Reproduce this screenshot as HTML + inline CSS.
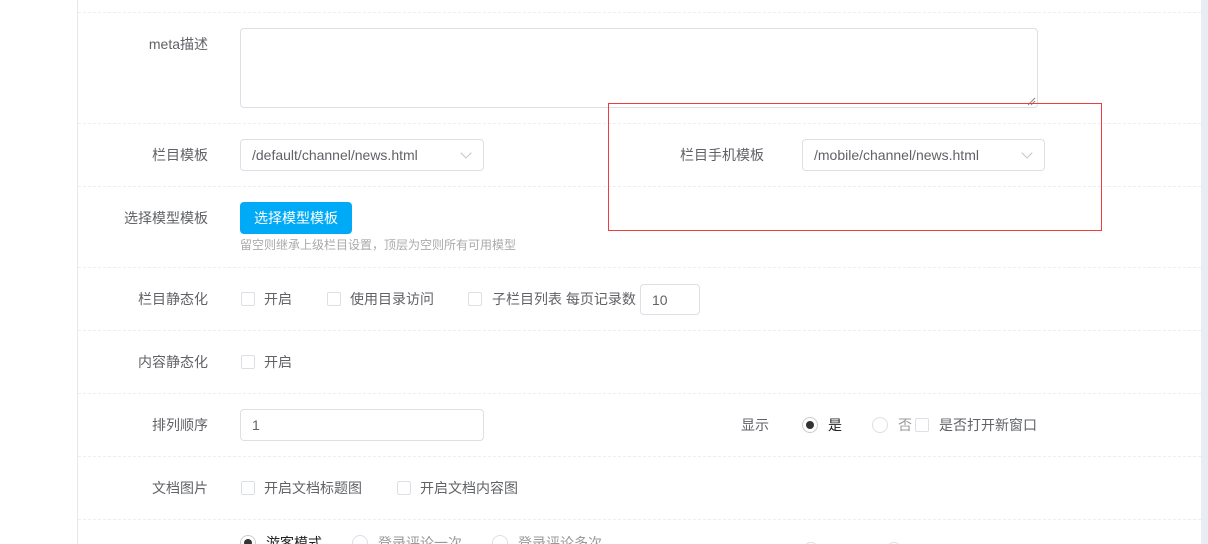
<!DOCTYPE html>
<html style="overflow:hidden;height:544px"><head><meta charset="utf-8"><style>
*{margin:0;padding:0;box-sizing:border-box}
html,body{overflow:hidden}
body{width:1208px;height:544px;overflow:hidden;background:#fff;position:relative;font-family:"Liberation Sans","Noto Sans CJK SC",sans-serif;font-size:14px;color:#606266}
.a{position:absolute}
.vl{left:77px;top:0;width:1px;height:544px;background:#e4e7ed}
.rs{left:1201px;top:0;width:7px;height:544px;background:#e9edf3}
.hr{left:78px;width:1123px;height:0;border-top:1px dashed #ebeef5}
.lb{width:130px;text-align:right;left:78px;line-height:20px}
.inp{border:1px solid #dcdfe6;border-radius:4px;background:#fff;color:#606266;line-height:30px;padding-left:11px}
.cb{width:14px;height:14px;border:1px solid #dcdfe6;border-radius:2px;background:#fff}
.rd{width:16px;height:16px;border:1px solid #dcdfe6;border-radius:50%;background:#fff}
.rd.on{border-color:#ccc}
.rd.on:after{content:"";position:absolute;left:3px;top:3px;width:8px;height:8px;border-radius:50%;background:#333}
.t{line-height:20px}
.chev{width:8px;height:8px;border-right:1px solid #c0c4cc;border-bottom:1px solid #c0c4cc;transform:rotate(45deg)}
</style></head><body>
<div class="a vl"></div><div class="a rs"></div>
<div class="a hr" style="top:12px"></div>
<div class="a hr" style="top:123px"></div>
<div class="a hr" style="top:186px"></div>
<div class="a hr" style="top:267px"></div>
<div class="a hr" style="top:330px"></div>
<div class="a hr" style="top:393px"></div>
<div class="a hr" style="top:456px"></div>
<div class="a hr" style="top:519px"></div>

<div class="a lb" style="top:34px">meta描述</div>
<div class="a inp" style="left:240px;top:28px;width:798px;height:80px"></div>
<svg class="a" style="left:1026px;top:96px" width="10" height="10"><path d="M2 9L9 2M5 9L9 5" stroke="#888" stroke-width="1"/></svg>

<div class="a lb" style="top:145px">栏目模板</div>
<div class="a inp" style="left:240px;top:139px;width:244px;height:32px">/default/channel/news.html</div>
<div class="a chev" style="left:462px;top:149px"></div>

<div class="a t" style="left:680px;top:145px">栏目手机模板</div>
<div class="a inp" style="left:802px;top:139px;width:243px;height:32px">/mobile/channel/news.html</div>
<div class="a chev" style="left:1023px;top:149px"></div>
<div class="a" style="left:608px;top:103px;width:494px;height:128px;border:1px solid #f03c3c"></div>

<div class="a lb" style="top:208px">选择模型模板</div>
<div class="a" style="left:240px;top:202px;width:112px;height:32px;background:#00aaf7;border-radius:4px;color:#fff;text-align:center;line-height:32px">选择模型模板</div>
<div class="a" style="left:240px;top:237px;font-size:12px;color:#aaa;line-height:16px">留空则继承上级栏目设置，顶层为空则所有可用模型</div>

<div class="a lb" style="top:289px">栏目静态化</div>
<div class="a cb" style="left:241px;top:292px"></div><div class="a t" style="left:264px;top:289px">开启</div>
<div class="a cb" style="left:327px;top:292px"></div><div class="a t" style="left:350px;top:289px">使用目录访问</div>
<div class="a cb" style="left:468px;top:292px"></div><div class="a t" style="left:492px;top:289px">子栏目列表 每页记录数</div>
<div class="a inp" style="left:640px;top:284px;width:60px;height:31px">10</div>

<div class="a lb" style="top:352px">内容静态化</div>
<div class="a cb" style="left:241px;top:355px"></div><div class="a t" style="left:264px;top:352px">开启</div>

<div class="a lb" style="top:415px">排列顺序</div>
<div class="a inp" style="left:240px;top:409px;width:244px;height:32px">1</div>
<div class="a t" style="left:741px;top:415px">显示</div>
<div class="a rd on" style="left:802px;top:417px"></div><div class="a t" style="left:828px;top:415px;color:#222">是</div>
<div class="a rd" style="left:872px;top:417px"></div><div class="a t" style="left:898px;top:415px;color:#999">否</div>
<div class="a cb" style="left:915px;top:418px"></div><div class="a t" style="left:939px;top:415px">是否打开新窗口</div>

<div class="a lb" style="top:478px">文档图片</div>
<div class="a cb" style="left:241px;top:481px"></div><div class="a t" style="left:264px;top:478px">开启文档标题图</div>
<div class="a cb" style="left:397px;top:481px"></div><div class="a t" style="left:420px;top:478px">开启文档内容图</div>

<div class="a rd on" style="left:240px;top:535px"></div><div class="a t" style="left:266px;top:533px;color:#222">游客模式</div>
<div class="a rd" style="left:352px;top:535px"></div><div class="a t" style="left:378px;top:533px;color:#999">登录评论一次</div>
<div class="a rd" style="left:492px;top:535px"></div><div class="a t" style="left:518px;top:533px;color:#999">登录评论多次</div>
<div class="a rd" style="left:803px;top:542px"></div>
<div class="a rd" style="left:886px;top:542px"></div>
</body></html>
